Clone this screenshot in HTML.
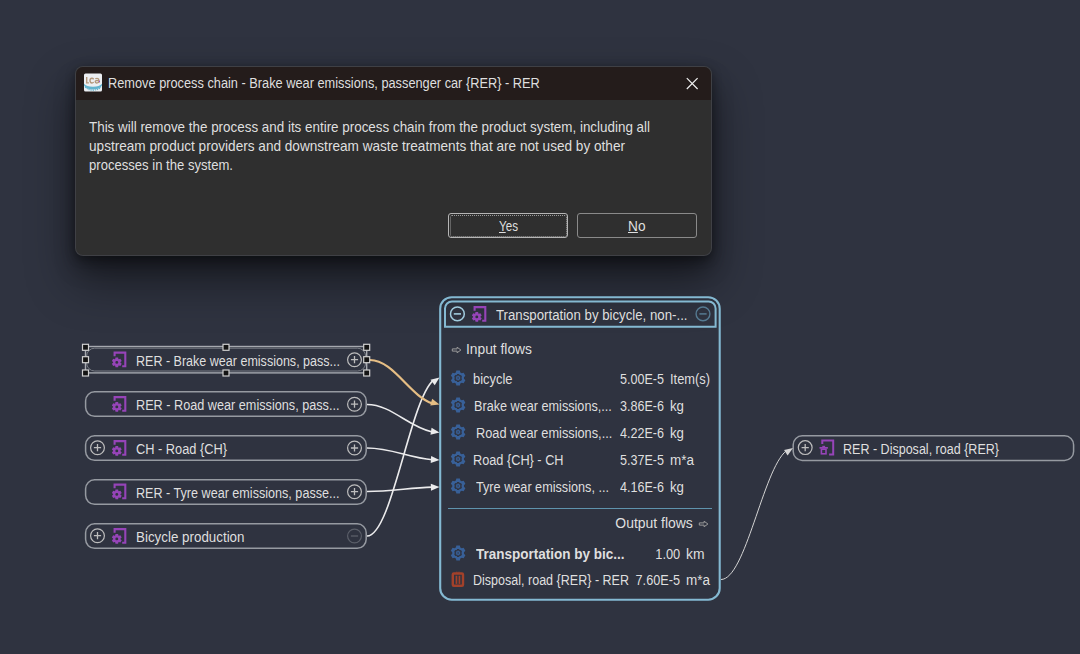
<!DOCTYPE html>
<html><head><meta charset="utf-8"><title>Remove process chain</title>
<style>
html,body{margin:0;padding:0;}
body{width:1080px;height:654px;overflow:hidden;background:#2f3340;position:relative;font-family:"Liberation Sans",sans-serif;}
.t{position:absolute;white-space:nowrap;line-height:18px;font-size:14px;color:#dfdfdf;transform-origin:0 50%;}
.abs{position:absolute;}
#dlg{position:absolute;left:75.5px;top:67px;width:635.5px;height:188px;border-radius:7px;background:#2f2f2f;box-shadow:0 0 0 1px #3f4045, 0 3px 10px 1px rgba(0,0,0,.34), 0 12px 22px 0 rgba(0,0,0,.3), 0 24px 46px 4px rgba(0,0,0,.42);overflow:hidden;}
#dlg .bar{position:absolute;left:0;top:0;right:0;height:33px;background:#241c1b;}
.btn{position:absolute;top:213px;height:23px;border:1px solid #9a9a9a;border-radius:3px;}
.node{position:absolute;left:85px;width:279px;height:23px;border:1.5px solid #a4a8ae;border-radius:9px;}
svg{position:absolute;left:0;top:0;overflow:visible;}

</style></head><body>
<div id="dlg"><div class="bar"></div></div>
<div class="btn" style="left:448px;width:118px;border-color:#b5b5b5;"></div>
<div class="abs" style="left:450px;top:215px;width:115px;height:20px;border:1px dotted #9a9a9a;border-radius:2px;"></div>
<div class="btn" style="left:577px;width:118px;border-color:#8a8a8a;"></div>
<div class="abs" style="left:448px;top:508.2px;width:264px;height:1.2px;background:#5f93ad;"></div>
<svg width="1080" height="654" viewBox="0 0 1080 654">
<rect x="440.2" y="297.2" width="279.5" height="302.5" rx="11.5" fill="none" stroke="#84b9d2" stroke-width="2.1"/>
<path d="M445 326.7 V308.5 a7 7 0 0 1 7 -7 H708.6 a7 7 0 0 1 7 7 V326.7 Z" fill="none" stroke="#84b9d2" stroke-width="2"/>
<rect x="85.6" y="391.8" width="280.6" height="24.5" rx="9" fill="none" stroke="#969aa1" stroke-width="1.5"/>
<rect x="85.6" y="435.8" width="280.6" height="24.5" rx="9" fill="none" stroke="#969aa1" stroke-width="1.5"/>
<rect x="85.6" y="479.8" width="280.6" height="24.5" rx="9" fill="none" stroke="#969aa1" stroke-width="1.5"/>
<rect x="85.6" y="523.8" width="280.6" height="24.5" rx="9" fill="none" stroke="#969aa1" stroke-width="1.5"/>
<rect x="793.2" y="435.8" width="280.4" height="24.6" rx="9" fill="none" stroke="#969aa1" stroke-width="1.5"/>
<rect x="85.5" y="346.5" width="281.2" height="26.4" fill="none" stroke="#a6a9af" stroke-width="1.4"/>
<rect x="86.6" y="348.2" width="279" height="22.8" rx="8" fill="none" stroke="#7a7e86" stroke-width="1"/>
<path d="M367 404.5 C391.36 404.50 409.14 427.67 432.29 431.93" fill="none" stroke="#ebebec" stroke-width="1.6"/><path d="M439.50 432.60 L430.45 434.68 L431.57 427.77Z" fill="#ebebec"/>
<path d="M367 448 C391.36 448.00 409.14 457.89 432.29 459.71" fill="none" stroke="#ebebec" stroke-width="1.6"/><path d="M439.50 460.00 L430.68 462.89 L431.16 455.91Z" fill="#ebebec"/>
<path d="M367 491.5 C391.36 491.50 409.14 487.79 432.29 487.11" fill="none" stroke="#ebebec" stroke-width="1.6"/><path d="M439.50 487.00 L430.99 490.72 L430.81 483.73Z" fill="#ebebec"/>
<path d="M367 536 C391.63 536.00 409.53 402.34 433.05 380.42" fill="none" stroke="#ebebec" stroke-width="1.6"/><path d="M439.50 377.40 L434.71 385.36 L430.52 379.75Z" fill="#ebebec"/>
<path d="M370 360 C393.30 360.00 410.32 396.53 432.44 403.39" fill="none" stroke="#e6be84" stroke-width="2.2"/><path d="M439.50 404.50 L430.28 405.61 L432.13 398.86Z" fill="#e6be84"/>
<path d="M721 579.5 C745.35 579.50 763.08 469.65 786.29 450.75" fill="none" stroke="#d4d4d4" stroke-width="1"/><path d="M793.00 448.00 L787.58 455.41 L784.06 450.07Z" fill="#d4d4d4"/>
<path d="M114.6 356.3 V352.6 H125.3 V366.3 H122.2" fill="none" stroke="#9644b8" stroke-width="2.1"/><path d="M115.21 359.06 L115.48 357.47 L118.12 357.47 L118.39 359.06 L118.90 359.35 L120.41 358.79 L121.73 361.08 L120.49 362.11 L120.49 362.69 L121.73 363.72 L120.41 366.01 L118.90 365.45 L118.39 365.74 L118.12 367.33 L115.48 367.33 L115.21 365.74 L114.70 365.45 L113.19 366.01 L111.87 363.72 L113.11 362.69 L113.11 362.11 L111.87 361.08 L113.19 358.79 L114.70 359.35Z M118.25 362.40 a1.45 1.45 0 1 0 -2.9 0 a1.45 1.45 0 1 0 2.9 0Z" fill="#9644b8" fill-rule="evenodd"/>
<path d="M114.6 400.8 V397.1 H125.3 V410.8 H122.2" fill="none" stroke="#9644b8" stroke-width="2.1"/><path d="M115.21 403.56 L115.48 401.97 L118.12 401.97 L118.39 403.56 L118.90 403.85 L120.41 403.29 L121.73 405.58 L120.49 406.61 L120.49 407.19 L121.73 408.22 L120.41 410.51 L118.90 409.95 L118.39 410.24 L118.12 411.83 L115.48 411.83 L115.21 410.24 L114.70 409.95 L113.19 410.51 L111.87 408.22 L113.11 407.19 L113.11 406.61 L111.87 405.58 L113.19 403.29 L114.70 403.85Z M118.25 406.90 a1.45 1.45 0 1 0 -2.9 0 a1.45 1.45 0 1 0 2.9 0Z" fill="#9644b8" fill-rule="evenodd"/>
<path d="M114.6 444.8 V441.1 H125.3 V454.8 H122.2" fill="none" stroke="#9644b8" stroke-width="2.1"/><path d="M115.21 447.56 L115.48 445.97 L118.12 445.97 L118.39 447.56 L118.90 447.85 L120.41 447.29 L121.73 449.58 L120.49 450.61 L120.49 451.19 L121.73 452.22 L120.41 454.51 L118.90 453.95 L118.39 454.24 L118.12 455.83 L115.48 455.83 L115.21 454.24 L114.70 453.95 L113.19 454.51 L111.87 452.22 L113.11 451.19 L113.11 450.61 L111.87 449.58 L113.19 447.29 L114.70 447.85Z M118.25 450.90 a1.45 1.45 0 1 0 -2.9 0 a1.45 1.45 0 1 0 2.9 0Z" fill="#9644b8" fill-rule="evenodd"/>
<path d="M114.6 488.3 V484.6 H125.3 V498.3 H122.2" fill="none" stroke="#9644b8" stroke-width="2.1"/><path d="M115.21 491.06 L115.48 489.47 L118.12 489.47 L118.39 491.06 L118.90 491.35 L120.41 490.79 L121.73 493.08 L120.49 494.11 L120.49 494.69 L121.73 495.72 L120.41 498.01 L118.90 497.45 L118.39 497.74 L118.12 499.33 L115.48 499.33 L115.21 497.74 L114.70 497.45 L113.19 498.01 L111.87 495.72 L113.11 494.69 L113.11 494.11 L111.87 493.08 L113.19 490.79 L114.70 491.35Z M118.25 494.40 a1.45 1.45 0 1 0 -2.9 0 a1.45 1.45 0 1 0 2.9 0Z" fill="#9644b8" fill-rule="evenodd"/>
<path d="M114.6 532.8 V529.1 H125.3 V542.8 H122.2" fill="none" stroke="#9644b8" stroke-width="2.1"/><path d="M115.21 535.56 L115.48 533.97 L118.12 533.97 L118.39 535.56 L118.90 535.85 L120.41 535.29 L121.73 537.58 L120.49 538.61 L120.49 539.19 L121.73 540.22 L120.41 542.51 L118.90 541.95 L118.39 542.24 L118.12 543.83 L115.48 543.83 L115.21 542.24 L114.70 541.95 L113.19 542.51 L111.87 540.22 L113.11 539.19 L113.11 538.61 L111.87 537.58 L113.19 535.29 L114.70 535.85Z M118.25 538.90 a1.45 1.45 0 1 0 -2.9 0 a1.45 1.45 0 1 0 2.9 0Z" fill="#9644b8" fill-rule="evenodd"/>
<path d="M822.3 444.0 V440.6 H833.2 V454.4 H829.1" fill="none" stroke="#9644b8" stroke-width="2"/><rect x="821.4" y="449.2" width="4.6" height="4.6" fill="none" stroke="#9644b8" stroke-width="1.6"/><rect x="819.5" y="447.0" width="8.4" height="1.7" fill="#9644b8"/><rect x="822.3" y="445.8" width="2.8" height="1.5" fill="#9644b8"/>
<path d="M474.6 310.8 V307.1 H485.3 V320.8 H482.2" fill="none" stroke="#9644b8" stroke-width="2.1"/><path d="M475.21 313.56 L475.48 311.97 L478.12 311.97 L478.39 313.56 L478.90 313.85 L480.41 313.29 L481.73 315.58 L480.49 316.61 L480.49 317.19 L481.73 318.22 L480.41 320.51 L478.90 319.95 L478.39 320.24 L478.12 321.83 L475.48 321.83 L475.21 320.24 L474.70 319.95 L473.19 320.51 L471.87 318.22 L473.11 317.19 L473.11 316.61 L471.87 315.58 L473.19 313.29 L474.70 313.85Z M478.25 316.90 a1.45 1.45 0 1 0 -2.9 0 a1.45 1.45 0 1 0 2.9 0Z" fill="#9644b8" fill-rule="evenodd"/>
<circle cx="354.5" cy="359.7" r="6.9" fill="none" stroke="#bdbdbd" stroke-width="1.2"/><path d="M350.9 359.7 H358.1 M354.5 356.09999999999997 V363.3" stroke="#bdbdbd" stroke-width="1.3" fill="none"/>
<circle cx="354.5" cy="404.2" r="6.9" fill="none" stroke="#bdbdbd" stroke-width="1.2"/><path d="M350.9 404.2 H358.1 M354.5 400.59999999999997 V407.8" stroke="#bdbdbd" stroke-width="1.3" fill="none"/>
<circle cx="354.5" cy="448" r="6.9" fill="none" stroke="#bdbdbd" stroke-width="1.2"/><path d="M350.9 448 H358.1 M354.5 444.4 V451.6" stroke="#bdbdbd" stroke-width="1.3" fill="none"/>
<circle cx="354.5" cy="491.7" r="6.9" fill="none" stroke="#bdbdbd" stroke-width="1.2"/><path d="M350.9 491.7 H358.1 M354.5 488.09999999999997 V495.3" stroke="#bdbdbd" stroke-width="1.3" fill="none"/>
<circle cx="354.5" cy="536" r="6.9" fill="none" stroke="#5b5f69" stroke-width="1.2"/><path d="M350.9 536 H358.1" stroke="#5b5f69" stroke-width="1.3" fill="none"/>
<circle cx="97.5" cy="447.7" r="6.9" fill="none" stroke="#bdbdbd" stroke-width="1.2"/><path d="M93.9 447.7 H101.1 M97.5 444.09999999999997 V451.3" stroke="#bdbdbd" stroke-width="1.3" fill="none"/>
<circle cx="97.5" cy="535.7" r="6.9" fill="none" stroke="#bdbdbd" stroke-width="1.2"/><path d="M93.9 535.7 H101.1 M97.5 532.1 V539.3000000000001" stroke="#bdbdbd" stroke-width="1.3" fill="none"/>
<circle cx="805.2" cy="447.6" r="6.9" fill="none" stroke="#bdbdbd" stroke-width="1.2"/><path d="M801.6 447.6 H808.8000000000001 M805.2 444.0 V451.20000000000005" stroke="#bdbdbd" stroke-width="1.3" fill="none"/>
<circle cx="457.4" cy="313.9" r="6.9" fill="none" stroke="#a0cbde" stroke-width="1.5"/><path d="M453.79999999999995 313.9 H461.0" stroke="#a0cbde" stroke-width="1.6" fill="none"/>
<circle cx="703" cy="313.9" r="6.9" fill="none" stroke="#557a92" stroke-width="1.4"/><path d="M699.4 313.9 H706.6" stroke="#557a92" stroke-width="1.5" fill="none"/>
<path d="M455.87 372.54 L456.36 370.60 L459.84 370.60 L460.33 372.54 L461.72 373.34 L463.64 372.80 L465.38 375.80 L463.95 377.20 L463.95 378.80 L465.38 380.20 L463.64 383.20 L461.72 382.66 L460.33 383.46 L459.84 385.40 L456.36 385.40 L455.87 383.46 L454.48 382.66 L452.56 383.20 L450.82 380.20 L452.25 378.80 L452.25 377.20 L450.82 375.80 L452.56 372.80 L454.48 373.34Z M456.76 374.99 L457.04 374.04 L459.16 374.04 L459.44 374.99 L460.04 375.33 L461.00 375.10 L462.06 376.94 L461.38 377.66 L461.38 378.34 L462.06 379.06 L461.00 380.90 L460.04 380.67 L459.44 381.01 L459.16 381.96 L457.04 381.96 L456.76 381.01 L456.16 380.67 L455.20 380.90 L454.14 379.06 L454.82 378.34 L454.82 377.66 L454.14 376.94 L455.20 375.10 L456.16 375.33Z" fill="#386098" fill-rule="evenodd"/><path d="M457.45 376.32 L457.58 375.55 L458.62 375.55 L458.75 376.32 L459.23 376.60 L459.96 376.33 L460.48 377.23 L459.88 377.72 L459.88 378.28 L460.48 378.77 L459.96 379.67 L459.23 379.40 L458.75 379.68 L458.62 380.45 L457.58 380.45 L457.45 379.68 L456.97 379.40 L456.24 379.67 L455.72 378.77 L456.32 378.28 L456.32 377.72 L455.72 377.23 L456.24 376.33 L456.97 376.60Z M458.90 378.00 a.8 .8 0 1 0 -1.6 0 a.8 .8 0 1 0 1.6 0Z" fill="#386098" fill-rule="evenodd"/>
<path d="M455.87 399.54 L456.36 397.60 L459.84 397.60 L460.33 399.54 L461.72 400.34 L463.64 399.80 L465.38 402.80 L463.95 404.20 L463.95 405.80 L465.38 407.20 L463.64 410.20 L461.72 409.66 L460.33 410.46 L459.84 412.40 L456.36 412.40 L455.87 410.46 L454.48 409.66 L452.56 410.20 L450.82 407.20 L452.25 405.80 L452.25 404.20 L450.82 402.80 L452.56 399.80 L454.48 400.34Z M456.76 401.99 L457.04 401.04 L459.16 401.04 L459.44 401.99 L460.04 402.33 L461.00 402.10 L462.06 403.94 L461.38 404.66 L461.38 405.34 L462.06 406.06 L461.00 407.90 L460.04 407.67 L459.44 408.01 L459.16 408.96 L457.04 408.96 L456.76 408.01 L456.16 407.67 L455.20 407.90 L454.14 406.06 L454.82 405.34 L454.82 404.66 L454.14 403.94 L455.20 402.10 L456.16 402.33Z" fill="#386098" fill-rule="evenodd"/><path d="M457.45 403.32 L457.58 402.55 L458.62 402.55 L458.75 403.32 L459.23 403.60 L459.96 403.33 L460.48 404.23 L459.88 404.72 L459.88 405.28 L460.48 405.77 L459.96 406.67 L459.23 406.40 L458.75 406.68 L458.62 407.45 L457.58 407.45 L457.45 406.68 L456.97 406.40 L456.24 406.67 L455.72 405.77 L456.32 405.28 L456.32 404.72 L455.72 404.23 L456.24 403.33 L456.97 403.60Z M458.90 405.00 a.8 .8 0 1 0 -1.6 0 a.8 .8 0 1 0 1.6 0Z" fill="#386098" fill-rule="evenodd"/>
<path d="M455.87 426.54 L456.36 424.60 L459.84 424.60 L460.33 426.54 L461.72 427.34 L463.64 426.80 L465.38 429.80 L463.95 431.20 L463.95 432.80 L465.38 434.20 L463.64 437.20 L461.72 436.66 L460.33 437.46 L459.84 439.40 L456.36 439.40 L455.87 437.46 L454.48 436.66 L452.56 437.20 L450.82 434.20 L452.25 432.80 L452.25 431.20 L450.82 429.80 L452.56 426.80 L454.48 427.34Z M456.76 428.99 L457.04 428.04 L459.16 428.04 L459.44 428.99 L460.04 429.33 L461.00 429.10 L462.06 430.94 L461.38 431.66 L461.38 432.34 L462.06 433.06 L461.00 434.90 L460.04 434.67 L459.44 435.01 L459.16 435.96 L457.04 435.96 L456.76 435.01 L456.16 434.67 L455.20 434.90 L454.14 433.06 L454.82 432.34 L454.82 431.66 L454.14 430.94 L455.20 429.10 L456.16 429.33Z" fill="#386098" fill-rule="evenodd"/><path d="M457.45 430.32 L457.58 429.55 L458.62 429.55 L458.75 430.32 L459.23 430.60 L459.96 430.33 L460.48 431.23 L459.88 431.72 L459.88 432.28 L460.48 432.77 L459.96 433.67 L459.23 433.40 L458.75 433.68 L458.62 434.45 L457.58 434.45 L457.45 433.68 L456.97 433.40 L456.24 433.67 L455.72 432.77 L456.32 432.28 L456.32 431.72 L455.72 431.23 L456.24 430.33 L456.97 430.60Z M458.90 432.00 a.8 .8 0 1 0 -1.6 0 a.8 .8 0 1 0 1.6 0Z" fill="#386098" fill-rule="evenodd"/>
<path d="M455.87 453.54 L456.36 451.60 L459.84 451.60 L460.33 453.54 L461.72 454.34 L463.64 453.80 L465.38 456.80 L463.95 458.20 L463.95 459.80 L465.38 461.20 L463.64 464.20 L461.72 463.66 L460.33 464.46 L459.84 466.40 L456.36 466.40 L455.87 464.46 L454.48 463.66 L452.56 464.20 L450.82 461.20 L452.25 459.80 L452.25 458.20 L450.82 456.80 L452.56 453.80 L454.48 454.34Z M456.76 455.99 L457.04 455.04 L459.16 455.04 L459.44 455.99 L460.04 456.33 L461.00 456.10 L462.06 457.94 L461.38 458.66 L461.38 459.34 L462.06 460.06 L461.00 461.90 L460.04 461.67 L459.44 462.01 L459.16 462.96 L457.04 462.96 L456.76 462.01 L456.16 461.67 L455.20 461.90 L454.14 460.06 L454.82 459.34 L454.82 458.66 L454.14 457.94 L455.20 456.10 L456.16 456.33Z" fill="#386098" fill-rule="evenodd"/><path d="M457.45 457.32 L457.58 456.55 L458.62 456.55 L458.75 457.32 L459.23 457.60 L459.96 457.33 L460.48 458.23 L459.88 458.72 L459.88 459.28 L460.48 459.77 L459.96 460.67 L459.23 460.40 L458.75 460.68 L458.62 461.45 L457.58 461.45 L457.45 460.68 L456.97 460.40 L456.24 460.67 L455.72 459.77 L456.32 459.28 L456.32 458.72 L455.72 458.23 L456.24 457.33 L456.97 457.60Z M458.90 459.00 a.8 .8 0 1 0 -1.6 0 a.8 .8 0 1 0 1.6 0Z" fill="#386098" fill-rule="evenodd"/>
<path d="M455.87 480.54 L456.36 478.60 L459.84 478.60 L460.33 480.54 L461.72 481.34 L463.64 480.80 L465.38 483.80 L463.95 485.20 L463.95 486.80 L465.38 488.20 L463.64 491.20 L461.72 490.66 L460.33 491.46 L459.84 493.40 L456.36 493.40 L455.87 491.46 L454.48 490.66 L452.56 491.20 L450.82 488.20 L452.25 486.80 L452.25 485.20 L450.82 483.80 L452.56 480.80 L454.48 481.34Z M456.76 482.99 L457.04 482.04 L459.16 482.04 L459.44 482.99 L460.04 483.33 L461.00 483.10 L462.06 484.94 L461.38 485.66 L461.38 486.34 L462.06 487.06 L461.00 488.90 L460.04 488.67 L459.44 489.01 L459.16 489.96 L457.04 489.96 L456.76 489.01 L456.16 488.67 L455.20 488.90 L454.14 487.06 L454.82 486.34 L454.82 485.66 L454.14 484.94 L455.20 483.10 L456.16 483.33Z" fill="#386098" fill-rule="evenodd"/><path d="M457.45 484.32 L457.58 483.55 L458.62 483.55 L458.75 484.32 L459.23 484.60 L459.96 484.33 L460.48 485.23 L459.88 485.72 L459.88 486.28 L460.48 486.77 L459.96 487.67 L459.23 487.40 L458.75 487.68 L458.62 488.45 L457.58 488.45 L457.45 487.68 L456.97 487.40 L456.24 487.67 L455.72 486.77 L456.32 486.28 L456.32 485.72 L455.72 485.23 L456.24 484.33 L456.97 484.60Z M458.90 486.00 a.8 .8 0 1 0 -1.6 0 a.8 .8 0 1 0 1.6 0Z" fill="#386098" fill-rule="evenodd"/>
<path d="M455.87 547.54 L456.36 545.60 L459.84 545.60 L460.33 547.54 L461.72 548.34 L463.64 547.80 L465.38 550.80 L463.95 552.20 L463.95 553.80 L465.38 555.20 L463.64 558.20 L461.72 557.66 L460.33 558.46 L459.84 560.40 L456.36 560.40 L455.87 558.46 L454.48 557.66 L452.56 558.20 L450.82 555.20 L452.25 553.80 L452.25 552.20 L450.82 550.80 L452.56 547.80 L454.48 548.34Z M456.76 549.99 L457.04 549.04 L459.16 549.04 L459.44 549.99 L460.04 550.33 L461.00 550.10 L462.06 551.94 L461.38 552.66 L461.38 553.34 L462.06 554.06 L461.00 555.90 L460.04 555.67 L459.44 556.01 L459.16 556.96 L457.04 556.96 L456.76 556.01 L456.16 555.67 L455.20 555.90 L454.14 554.06 L454.82 553.34 L454.82 552.66 L454.14 551.94 L455.20 550.10 L456.16 550.33Z" fill="#386098" fill-rule="evenodd"/><path d="M457.45 551.32 L457.58 550.55 L458.62 550.55 L458.75 551.32 L459.23 551.60 L459.96 551.33 L460.48 552.23 L459.88 552.72 L459.88 553.28 L460.48 553.77 L459.96 554.67 L459.23 554.40 L458.75 554.68 L458.62 555.45 L457.58 555.45 L457.45 554.68 L456.97 554.40 L456.24 554.67 L455.72 553.77 L456.32 553.28 L456.32 552.72 L455.72 552.23 L456.24 551.33 L456.97 551.60Z M458.90 553.00 a.8 .8 0 1 0 -1.6 0 a.8 .8 0 1 0 1.6 0Z" fill="#386098" fill-rule="evenodd"/>
<rect x="452.8" y="573.5" width="10.2" height="12.2" rx="1" fill="none" stroke="#a3412a" stroke-width="2.4"/><rect x="455.6" y="575.7" width="1.7" height="8.2" fill="#a3412a"/><rect x="458.6" y="575.7" width="1.7" height="8.2" fill="#a3412a"/><rect x="456.2" y="571.7" width="1.2" height="1" fill="#a3412a"/><rect x="458.4" y="571.7" width="1.2" height="1" fill="#a3412a"/>
<path d="M686.8 78.2 L697.6 89 M697.6 78.2 L686.8 89" stroke="#f0f0f0" stroke-width="1.2" fill="none"/>
<path d="M452.3 348.9 H457.1 V347.2 L460.90000000000003 350 L457.1 352.8 V351.1 H452.3 Z" fill="none" stroke="#9b9b9b" stroke-width="1"/>
<path d="M699.3 522.9 H704.0999999999999 V521.2 L707.9 524 L704.0999999999999 526.8 V525.1 H699.3 Z" fill="none" stroke="#9b9b9b" stroke-width="1"/>
<rect x="82.5" y="344.3" width="6" height="6" fill="#141414" stroke="#d0d0d0" stroke-width="1.2"/>
<rect x="82.5" y="356.7" width="6" height="6" fill="#141414" stroke="#d0d0d0" stroke-width="1.2"/>
<rect x="82.5" y="370.0" width="6" height="6" fill="#141414" stroke="#d0d0d0" stroke-width="1.2"/>
<rect x="223.0" y="344.3" width="6" height="6" fill="#141414" stroke="#d0d0d0" stroke-width="1.2"/>
<rect x="223.0" y="370.0" width="6" height="6" fill="#141414" stroke="#d0d0d0" stroke-width="1.2"/>
<rect x="363.7" y="344.3" width="6" height="6" fill="#141414" stroke="#d0d0d0" stroke-width="1.2"/>
<rect x="363.7" y="356.7" width="6" height="6" fill="#141414" stroke="#d0d0d0" stroke-width="1.2"/>
<rect x="363.7" y="370.0" width="6" height="6" fill="#141414" stroke="#d0d0d0" stroke-width="1.2"/>
<g transform="translate(84,73.5)">
<rect x="0" y="0" width="18" height="18" rx="1.5" fill="#eceef2"/>
<path d="M2.7 3.6 V9.4 H4.9" fill="none" stroke="#b3977b" stroke-width="1.4"/>
<path d="M9.7 5.7 Q8.9 4.8 7.9 4.8 Q6 4.8 6 7.1 Q6 9.5 7.9 9.5 Q8.9 9.5 9.7 8.6" fill="none" stroke="#b3977b" stroke-width="1.4"/>
<path d="M11.3 5.3 Q12.3 4.7 13.4 4.8 Q14.9 4.9 14.9 6.4 V9.6 M14.9 7 Q11.1 6.8 11.2 8.3 Q11.3 9.6 12.8 9.5 Q14.3 9.3 14.9 8.2" fill="none" stroke="#b3977b" stroke-width="1.3"/>
<path d="M0 10.3 Q2.4 13.2 9 13.2 Q15.6 13.2 18 10.3 L18 12 Q15.8 15.9 9 15.9 Q2.2 15.9 0 12 Z" fill="#62b3ce"/>
<path d="M1.2 13.4 Q3.5 16.6 9 16.6 Q14.5 16.6 16.8 13.4" fill="none" stroke="#62b3ce" stroke-width="1.2" stroke-dasharray="1.2 0.9"/>
<rect x="15" y="7.3" width="1" height="1" fill="#8a2be2"/>
</g>
</svg>

<span class="t" id="t0" style="left:107.80px;top:74.15px;transform:scaleX(0.9127);">Remove process chain - Brake wear emissions, passenger car {RER} - RER</span>
<span class="t" id="t1" style="font-size:14.5px;left:89.30px;top:117.98px;transform:scaleX(0.9244);">This will remove the process and its entire process chain from the product system, including all</span>
<span class="t" id="t2" style="font-size:14.5px;left:89.30px;top:136.98px;transform:scaleX(0.9380);">upstream product providers and downstream waste treatments that are not used by other</span>
<span class="t" id="t3" style="font-size:14.5px;left:89.30px;top:155.98px;transform:scaleX(0.9024);">processes in the system.</span>
<span class="t" id="t4" style="left:498.50px;top:217.15px;transform:scaleX(0.8312);"><u>Y</u>es</span>
<span class="t" id="t5" style="left:627.50px;top:217.15px;transform:scaleX(0.9765);"><u>N</u>o</span>
<span class="t" id="t6" style="left:135.70px;top:352.15px;transform:scaleX(0.8949);">RER - Brake wear emissions, pass...</span>
<span class="t" id="t7" style="left:136.00px;top:396.15px;transform:scaleX(0.9050);">RER - Road wear emissions, pass...</span>
<span class="t" id="t8" style="left:135.50px;top:440.15px;transform:scaleX(0.9137);">CH - Road {CH}</span>
<span class="t" id="t9" style="left:136.00px;top:484.15px;transform:scaleX(0.8998);">RER - Tyre wear emissions, passe...</span>
<span class="t" id="t10" style="left:135.50px;top:528.15px;transform:scaleX(0.9549);">Bicycle production</span>
<span class="t" id="t11" style="left:843.20px;top:440.15px;transform:scaleX(0.8950);">RER - Disposal, road {RER}</span>
<span class="t" id="t12" style="left:496.20px;top:306.15px;transform:scaleX(0.9453);">Transportation by bicycle, non-...</span>
<span class="t" id="t13" style="left:466.30px;top:340.15px;transform:scaleX(0.9860);">Input flows</span>
<span class="t" id="t14" style="left:473.20px;top:370.15px;transform:scaleX(0.9230);">bicycle</span>
<span class="t" id="t15" style="right:416.00px;top:370.15px;transform-origin:100% 50%;transform:scaleX(0.8971);">5.00E-5</span>
<span class="t" id="t16" style="left:670.00px;top:370.15px;transform:scaleX(0.9182);">Item(s)</span>
<span class="t" id="t17" style="left:474.00px;top:397.15px;transform:scaleX(0.9036);">Brake wear emissions,...</span>
<span class="t" id="t18" style="right:416.00px;top:397.15px;transform-origin:100% 50%;transform:scaleX(0.8971);">3.86E-6</span>
<span class="t" id="t19" style="left:670.00px;top:397.15px;transform:scaleX(0.9461);">kg</span>
<span class="t" id="t20" style="left:475.50px;top:424.15px;transform:scaleX(0.9123);">Road wear emissions,...</span>
<span class="t" id="t21" style="right:416.00px;top:424.15px;transform-origin:100% 50%;transform:scaleX(0.8971);">4.22E-6</span>
<span class="t" id="t22" style="left:670.00px;top:424.15px;transform:scaleX(0.9461);">kg</span>
<span class="t" id="t23" style="left:473.00px;top:451.15px;transform:scaleX(0.9087);">Road {CH} - CH</span>
<span class="t" id="t24" style="right:416.00px;top:451.15px;transform-origin:100% 50%;transform:scaleX(0.8971);">5.37E-5</span>
<span class="t" id="t25" style="left:670.00px;top:451.15px;transform:scaleX(0.9636);">m*a</span>
<span class="t" id="t26" style="left:476.30px;top:478.15px;transform:scaleX(0.9045);">Tyre wear emissions, ...</span>
<span class="t" id="t27" style="right:416.00px;top:478.15px;transform-origin:100% 50%;transform:scaleX(0.8971);">4.16E-6</span>
<span class="t" id="t28" style="left:670.00px;top:478.15px;transform:scaleX(0.9461);">kg</span>
<span class="t" id="t29" style="right:387.00px;top:514.15px;transform-origin:100% 50%;transform:scaleX(0.9958);">Output flows</span>
<span class="t" id="t30" style="font-weight:bold;left:476.20px;top:545.15px;transform:scaleX(0.9641);">Transportation by bic...</span>
<span class="t" id="t31" style="right:400.00px;top:545.15px;transform-origin:100% 50%;transform:scaleX(0.9174);">1.00</span>
<span class="t" id="t32" style="left:686.00px;top:545.15px;transform:scaleX(0.9908);">km</span>
<span class="t" id="t33" style="left:473.30px;top:571.15px;transform:scaleX(0.8950);">Disposal, road {RER} - RER</span>
<span class="t" id="t34" style="right:400.00px;top:571.15px;transform-origin:100% 50%;transform:scaleX(0.9073);">7.60E-5</span>
<span class="t" id="t35" style="left:686.00px;top:571.15px;transform:scaleX(0.9636);">m*a</span>
</body></html>
